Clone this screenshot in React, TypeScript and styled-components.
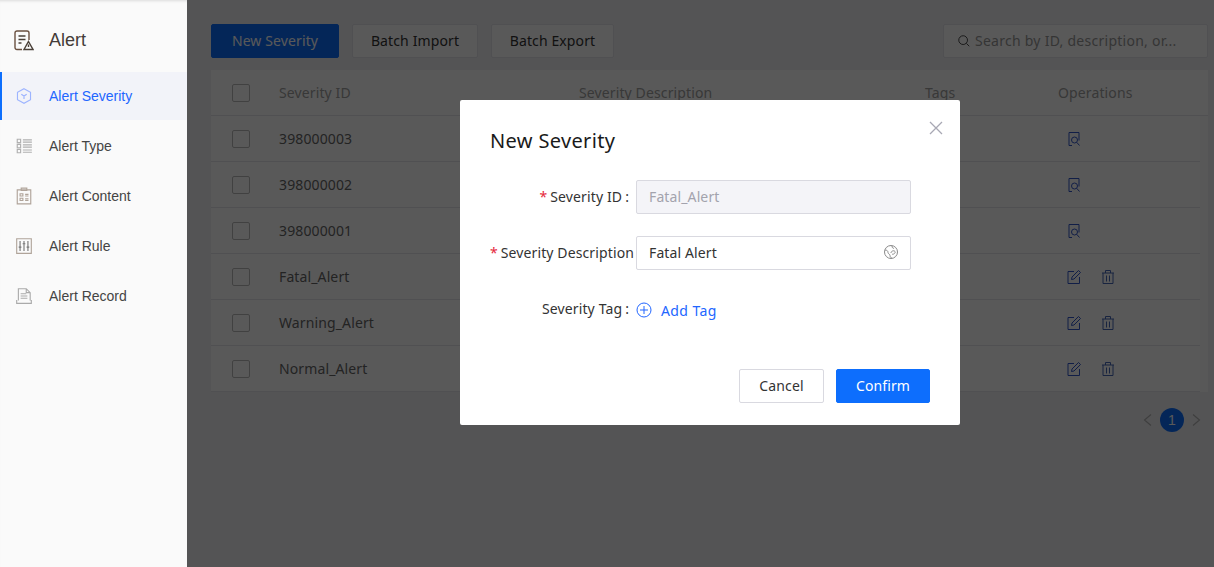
import { FC, ReactNode } from 'react'
import styled, { createGlobalStyle } from 'styled-components'

const BLUE = '#0d6efd'
const OP_BLUE = '#3358cc'
const FONT = `'Noto Sans', 'Noto Sans CJK SC', sans-serif`

const GlobalStyle = createGlobalStyle`
	html, body {
		margin: 0;
		height: 100%;
		overflow: hidden;
		background: #f1f1f4;
	}
	* {
		box-sizing: border-box;
	}
`

const Page = styled.div`
	display: flex;
	height: 567px;
	position: relative;
	font-family: ${FONT};
	font-size: 14px;
	letter-spacing: 0.12px;
`

const Sidebar = styled.aside`
	width: 187px;
	flex: none;
	background: #fafafa;
	box-shadow: inset 0 3px 3px -2px rgba(0, 0, 0, 0.12);
	font-family: 'Liberation Sans', Arial, sans-serif;
	letter-spacing: 0;
	position: relative;
	z-index: 2;
`

const SideHeader = styled.div`
	height: 72px;
	padding: 8px 0 0 14px;
	display: flex;
	align-items: center;
	gap: 15px;
	font-size: 18px;
	color: #443c38;
`

const SideItem = styled.div<{ $active?: boolean }>`
	height: 48px;
	margin-bottom: 2px;
	padding-left: ${p => (p.$active ? 13 : 15)}px;
	display: flex;
	align-items: center;
	gap: 16px;
	color: ${p => (p.$active ? '#2266ff' : '#444')};
	background: ${p => (p.$active ? '#f2f3f9' : 'transparent')};
	border-left: ${p => (p.$active ? `2px solid ${BLUE}` : 'none')};
`

const Main = styled.main`
	flex: 1;
	padding: 24px 6px 0 24px;
	min-width: 0;
`

const Toolbar = styled.div`
	display: flex;
	gap: 13px;
`

const ToolButton = styled.div<{ $primary?: boolean; $w: number }>`
	height: 34px;
	width: ${p => p.$w}px;
	padding-bottom: 2px;
	display: flex;
	align-items: center;
	justify-content: center;
	border-radius: 2px;
	border: 1px solid ${p => (p.$primary ? BLUE : '#e4e4ea')};
	background: ${p => (p.$primary ? BLUE : '#fff')};
	color: ${p => (p.$primary ? '#fff' : '#333')};
`

const Search = styled.div`
	margin-left: auto;
	width: 265px;
	height: 34px;
	display: flex;
	align-items: center;
	gap: 4px;
	padding: 0 0 1px 13px;
	background: #fff;
	border: 1px solid #e4e4ea;
	border-radius: 2px;
	color: #999;
	letter-spacing: 0.26px;
`

const Table = styled.div`
	margin-top: 12px;
	background: #fcfcfc;
`

const TableHead = styled.div`
	height: 46px;
	display: grid;
	grid-template-columns: 47px 300px 346px 133px 1fr;
	padding-left: 21px;
	align-items: center;
	background: #fff;
	color: #a0a0a0;
	border-bottom: 1px solid #e6e6ea;
`

const TableRow = styled(TableHead)`
	width: 989px;
	color: #666;
`

const Cell = styled.span`
	margin-bottom: 1px;
`

const Check = styled.span`
	width: 18px;
	height: 18px;
	border: 1px solid #bbb;
	border-radius: 2px;
	background: #fff;
`

const Ops = styled.div`
	display: flex;
	gap: 18px;
	padding-left: 8px;
	height: 16px;
`

const Pager = styled.div`
	margin-top: 16px;
	display: flex;
	justify-content: flex-end;
	align-items: center;
	gap: 6px;
	padding-right: 6px;
	color: #b4b4b4;
`

const PageNumber = styled.span`
	width: 24px;
	height: 24px;
	border-radius: 50%;
	background: ${BLUE};
	color: #fff;
	display: flex;
	align-items: center;
	justify-content: center;
	font: 14px 'Liberation Sans', Arial, sans-serif;
`

const Overlay = styled.div`
	position: absolute;
	inset: 0 0 0 187px;
	background: rgba(0, 0, 0, 0.65);
	padding: 100px 0 0 273px;
	z-index: 1;
`

const Modal = styled.div`
	width: 500px;
	height: 325px;
	background: #fff;
	border-radius: 2px;
	padding: 27px 30px 22px;
	position: relative;
	display: flex;
	flex-direction: column;
`

const Close = styled.svg`
	position: absolute;
	top: 21px;
	right: 17px;
`

const Title = styled.h2`
	margin: 0 0 26px;
	font-size: 20px;
	font-weight: 400;
	line-height: 27px;
	letter-spacing: 0.35px;
	color: #1a1a1a;
`

const Form = styled.div`
	display: flex;
	flex-direction: column;
	gap: 22px;
`

const FormRow = styled.div`
	display: flex;
	height: 34px;
	align-items: center;
`

const Label = styled.div`
	width: 146px;
	flex: none;
	display: flex;
	justify-content: flex-end;
	padding: 0 2px 2px 0;
	white-space: nowrap;
	color: #333;
`

const Star = styled.i`
	color: #e5283c;
	font-style: normal;
	margin-right: 3px;
`

const Colon = styled.span`
	margin: 0 5px 0 3px;
`

const Field = styled.div<{ $disabled?: boolean }>`
	width: 275px;
	height: 34px;
	display: flex;
	align-items: center;
	justify-content: space-between;
	padding: 0 11px 2px 12px;
	border: 1px solid #d9d9e0;
	border-radius: 2px;
	background: ${p => (p.$disabled ? '#f4f4f8' : '#fff')};
	color: ${p => (p.$disabled ? '#a3a3ad' : '#333')};
`

const AddTag = styled.div`
	display: flex;
	align-items: center;
	gap: 9px;
	margin-top: 2px;
	letter-spacing: 0.4px;
	color: #2266ff;
`

const Footer = styled.div`
	margin-top: auto;
	display: flex;
	justify-content: flex-end;
	gap: 12px;
`

const ModalButton = styled.div<{ $primary?: boolean }>`
	height: 34px;
	width: ${p => (p.$primary ? 94 : 85)}px;
	padding-bottom: 2px;
	display: flex;
	align-items: center;
	justify-content: center;
	border-radius: 2px;
	border: 1px solid ${p => (p.$primary ? BLUE : '#d9d9e0')};
	background: ${p => (p.$primary ? BLUE : '#fff')};
	color: ${p => (p.$primary ? '#fff' : '#333')};
`

const Icon: FC<{ size?: number; children: ReactNode; color?: string }> = ({
	size = 16,
	children,
	color = 'currentColor',
}) => (
	<svg width={size} height={size} viewBox='0 0 16 16' fill='none' stroke={color} strokeWidth='1'>
		{children}
	</svg>
)

const ViewIcon = () => (
	<Icon color={OP_BLUE}>
		<path d='M6 14.500H3V1.500h10v8' />
		<circle cx='8.500' cy='9' r='3' />
		<path d='M10.700 11.300 13.500 14.500' />
	</Icon>
)

const EditIcon = () => (
	<Icon color={OP_BLUE}>
		<path d='M8 2.500H2v12h11.500V8' />
		<path d='M5.500 10.500 6 8l6.500-6.500 2 2L8 10z' />
	</Icon>
)

const TrashIcon = () => (
	<Icon color='#4668b8'>
		<path d='M2 4h12M5.500 4V1.500h5V4M3 4v10.500h10V4M6.500 6.500v6M9.500 6.500v6' />
	</Icon>
)

const rows = [
	{ id: '398000003', custom: false },
	{ id: '398000002', custom: false },
	{ id: '398000001', custom: false },
	{ id: 'Fatal_Alert', custom: true },
	{ id: 'Warning_Alert', custom: true },
	{ id: 'Normal_Alert', custom: true },
]

const App: FC = () => (
	<Page>
		<GlobalStyle />
		<Sidebar>
			<SideHeader>
				<svg width='20' height='21' viewBox='0 0 20 21' fill='none' stroke='#4a4038' strokeWidth='1.400'>
					<path d='M8 19.500H3A2 2 0 0 1 1 17.500V3A2 2 0 0 1 3 1h10a2 2 0 0 1 2 2v7' stroke='#6a5040' />
					<path d='M4.500 6h7M4.500 9.500h7M4.500 13h3' />
					<path d='M14.500 11.500 19 19.500h-9z' />
					<path d='M14.500 14.500v2.500' />
				</svg>
				Alert
			</SideHeader>
			<SideItem $active>
				<Icon size={18} color='#9db4ff'>
					<path d='M8 1.500 13.800 4.700v6.600L8 14.500 2.200 11.300V4.700z' />
					<path d='M5.600 6.400 8 8l2.400-1.600M8 8v2.600' />
				</Icon>
				Alert Severity
			</SideItem>
			<SideItem>
				<Icon size={18} color='#b0b0b0'>
					<path d='M2 2h3v3H2zM2 6.500h3v3H2zM2 11h3v3H2zM7 2.500h8M7 4.500h8M7 7h8M7 9h8M7 11.500h8M7 13.500h8' />
				</Icon>
				Alert Type
			</SideItem>
			<SideItem>
				<Icon size={18} color='#b0a49a'>
					<path d='M2 2.500h12v12.500H2zM5.500 1h5v2h-5z' />
					<path d='M4.500 6h2.500v2h-2.500zM4.500 10h2.500v2h-2.500zM9 6.500h3M9 8h3M9 10.500h3M9 12h3' />
				</Icon>
				Alert Content
			</SideItem>
			<SideItem>
				<Icon size={18} color='#b0a49a'>
					<path d='M1.500 1.500h13v13h-13z' />
					<path d='M4.500 3.500v9M8 3.500v9M11.500 3.500v9' stroke='#777' />
					<path d='M3.300 9h2.400M6.800 6h2.400M10.300 9h2.400' stroke='#777' />
				</Icon>
				Alert Rule
			</SideItem>
			<SideItem>
				<Icon size={18} color='#aaa'>
					<path d='M3 12V1.500h7l3.500 3.500V12M1.500 11.500V14.500h13v-3M10 1.500v3.500h3.500' />
					<path d='M5 6h5M5 8h6M5 10h6' />
				</Icon>
				Alert Record
			</SideItem>
		</Sidebar>
		<Main>
			<Toolbar>
				<ToolButton $primary $w={128}>New Severity</ToolButton>
				<ToolButton $w={126}>Batch Import</ToolButton>
				<ToolButton $w={123}>Batch Export</ToolButton>
				<Search>
					<Icon size={14} color='#333'>
						<circle cx='7' cy='7' r='5' />
						<path d='M10.700 10.700 14 14' />
					</Icon>
					Search by ID, description, or...
				</Search>
			</Toolbar>
			<Table>
				<TableHead>
					<Check />
					<Cell>Severity ID</Cell>
					<Cell>Severity Description</Cell>
					<Cell>Tags</Cell>
					<Cell>Operations</Cell>
				</TableHead>
				{rows.map(row => (
					<TableRow key={row.id}>
						<Check />
						<Cell>{row.id}</Cell>
						<span />
						<span />
						<Ops>
							{row.custom ? (
								<>
									<EditIcon />
									<TrashIcon />
								</>
							) : (
								<ViewIcon />
							)}
						</Ops>
					</TableRow>
				))}
			</Table>
			<Pager>
				<svg width='12' height='14' viewBox='0 0 12 14' fill='none' stroke='currentColor' strokeWidth='1.200'>
					<path d='M9 1.500 2.500 7 9 12.500' />
				</svg>
				<PageNumber>1</PageNumber>
				<svg width='12' height='14' viewBox='0 0 12 14' fill='none' stroke='currentColor' strokeWidth='1.200'>
					<path d='M3 1.500 9.500 7 3 12.500' />
				</svg>
			</Pager>
		</Main>
		<Overlay>
			<Modal>
				<Close width='14' height='14' viewBox='0 0 14 14' fill='none' stroke='#a8a8b4' strokeWidth='1.300'>
					<path d='M1 1l12 12M13 1 1 13' />
				</Close>
				<Title>New Severity</Title>
				<Form>
					<FormRow>
						<Label>
							<Star>*</Star>Severity ID<Colon>:</Colon>
						</Label>
						<Field $disabled>Fatal_Alert</Field>
					</FormRow>
					<FormRow>
						<Label>
							<Star>*</Star>Severity Description
						</Label>
						<Field>
							Fatal Alert
							<svg width='16' height='16' viewBox='0 0 16 16' fill='none' stroke='#8a8a8a'>
								<circle cx='8' cy='8' r='6.500' />
								<path d='M2 6c2 0 3 1 3 2.500S7 10 7 11.500 8 14 9 14M9 2c0 2 1 2 2 2.500M8 9c0-2 3-3 4-1.500S10 11 9 10' />
							</svg>
						</Field>
					</FormRow>
					<FormRow>
						<Label>
							Severity Tag<Colon>:</Colon>
						</Label>
						<AddTag>
							<Icon size={16} color='#2266ff'>
								<circle cx='8' cy='8' r='7' />
								<path d='M8 4v8M4 8h8' />
							</Icon>
							Add Tag
						</AddTag>
					</FormRow>
				</Form>
				<Footer>
					<ModalButton>Cancel</ModalButton>
					<ModalButton $primary>Confirm</ModalButton>
				</Footer>
			</Modal>
		</Overlay>
	</Page>
)

export default App
